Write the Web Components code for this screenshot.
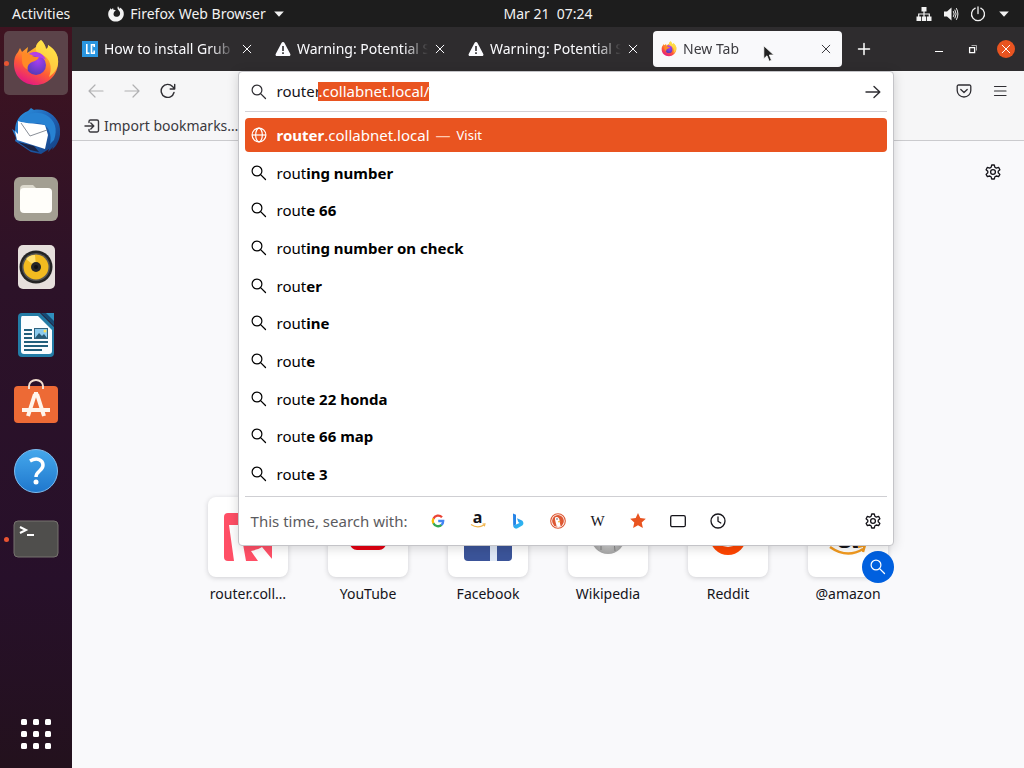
<!DOCTYPE html>
<html lang="en">
<head>
<meta charset="utf-8">
<title>New Tab</title>
<style>
html, body { margin: 0; height: 100%; overflow: hidden; }
body { font: 14px/20px "Noto Sans", "Open Sans", sans-serif; color: #15141a; }
</style>
</head>
<body>
<desktop-shell></desktop-shell>
<script>
const FOX = `<defs>
<linearGradient id="fo" x1=".8" y1="0" x2=".3" y2="1"><stop offset="0" stop-color="#fff44f"/><stop offset=".35" stop-color="#ffa52a"/><stop offset=".65" stop-color="#ff5a36"/><stop offset="1" stop-color="#e31587"/></linearGradient>
<radialGradient id="fp" cx=".6" cy=".3" r=".8"><stop offset="0" stop-color="#a63df0"/><stop offset="1" stop-color="#4a3bb0"/></radialGradient></defs>
<path fill="url(#fo)" d="M29 1c3 3 4 5 5 9 2-1 2-2 2-4 8 5 11 12 10 19-1 12-11 21-22 21C11 46 2 37 2 25c0-5 1-9 4-12l2-4 2 4 6-5-1 6c3-2 6-4 9-6 0-3 2-5 5-7z"/>
<path fill="#ffe14a" d="M29 1c3 3 4 5 5 9 2-1 2-2 2-4 8 5 11 12 10 19-1 6-5 10-9 13 3-8 2-15-3-20-4-3-9-2-10-7-1-4 2-7 5-10z" opacity=".75"/>
<circle cx="24" cy="26" r="10" fill="url(#fp)"/>
<path fill="#ff8a26" d="M10 14c4-1 8 0 10 3 2 1 5 1 7 1-1 3-4 4-7 5-4 2-5 5-4 8-4-2-6-5-6-9z"/>
<path fill="#b33fe6" d="M17 15c5-4 14-2 17 6-4-3-7-2-9-3s-5-2-8-3z"/>`;

const stroke = (d, w = 1.2) => `<path fill="none" stroke="currentColor" stroke-width="${w}" stroke-linecap="round" stroke-linejoin="round" d="${d}"/>`;

const ICONS = {
  back: [16, stroke("M15 8H1.500M7 2 1 8l6 6")],
  forward: [16, stroke("M1 8h13.500M9 2l6 6-6 6")],
  reload: [16, stroke("M14 9.500A6.500 6.500 0 1 1 12.500 3.500L14.500 5.500M14.700 1.500v4.500h-4.500", 1.4)],
  go: [16, stroke("M1 8h13.500M9 2.500l5.800 5.500L9 13.500", 1.4)],
  search: [16, `<circle cx="6" cy="6" r="4.900" fill="none" stroke="currentColor" stroke-width="1.200"/>` + stroke("M9.600 9.600l4.900 4.900", 1.3)],
  pocket: [16, stroke("M2.500 2h11a1.300 1.300 0 0 1 1.300 1.300V7.500a6.800 6.500 0 0 1-13.600 0V3.300A1.300 1.300 0 0 1 2.500 2zM4.800 6.500 8 9.500l3.200-3", 1.3)],
  menu: [16, stroke("M2.500 3.500h11.500M2.500 8h11.500M2.500 12.500h11.500", 1.2)],
  gear: [16, `<circle cx="8" cy="8" r="2.400" fill="none" stroke="currentColor" stroke-width="1.300"/>` + stroke("M6.700 1h2.600l.6 2.300 1.400.8 2.300-.7 1.300 2.300-1.700 1.600v1.500l1.700 1.600-1.300 2.200-2.300-.6-1.400.8-.6 2.200H6.700l-.6-2.200-1.400-.8-2.300.6-1.300-2.200 1.700-1.600V7.300L1.100 5.700l1.300-2.300 2.300.7 1.400-.8z", 1.3)],
  close: [16, stroke("M4.200 4.200l7.600 7.600M11.800 4.200l-7.600 7.600", 1)],
  plus: [16, stroke("M8 2.500v11M2.500 8h11", 1.5)],
  minimize: [16, `<path fill="#fff" d="M4 10h8v1H4z"/>`],
  restore: [16, `<path fill="none" stroke="#fff" d="M6.500 4.500h5v5" opacity=".6"/><path fill="none" stroke="#fff" stroke-width="1.300" d="M4.600 6.600h5v5h-5z"/>`],
  import: [16, stroke("M1 8h8.500M6.800 5 9.800 8l-3 3M5 4.500V3.500A1.500 1.500 0 0 1 6.500 2h6.500A1.500 1.500 0 0 1 14.500 3.500v9a1.500 1.500 0 0 1-1.500 1.500H6.500A1.500 1.500 0 0 1 5 12.500v-1", 1.4)],
  globe: [16, `<g fill="none" stroke="currentColor" stroke-width="1.200"><circle cx="8" cy="8" r="6.900"/><ellipse cx="8" cy="8" rx="3.300" ry="6.900"/><path d="M1 8h14"/></g>`],
  warning: [16, `<path fill="#fbfbfe" d="M8 1c.7 0 1.200.3 1.500.9l5.800 11c.5 1.100-.2 2.100-1.400 2.100H2.100C.9 15 .2 14 .7 12.900l5.800-11C6.800 1.300 7.300 1 8 1z"/><path fill="#2b2a2c" d="M7.200 5h1.600v5H7.200zM7.200 11.300h1.600v1.600H7.200z"/>`],
  lc: [16, `<path fill="#2a96e0" d="M0 0h16v16H0z"/><path fill="none" stroke="#fff" stroke-width="1.600" d="M4.800 3v9.200h2.700M12.200 6V3.800H9.500v8.400h2.700V9.500"/>`],
  fox: [48, FOX],
  foxMono: [16, `<path fill="#f2f2f2" d="M10 .2c.8 1 1 1.600 1.100 2.700.5-.2.800-.7.800-1.300C14.500 3 16 5.300 15.800 8.300c-.2 4-3.500 7.300-7.800 7.300S.4 12.400.2 8.400C.1 6.200.8 4.500 2 3.400l.4-1.300.8 1.300 2-1.500c-.1.800 0 1.400.4 1.900.8 0 1.700.2 2.200.9-1 .3-1.900.8-1.900 1.800-1.500 3.300 1.900 5.200 4.300 4 2.600-1.300 2.400-4.800.4-6.300C9.300 3 9.200 1.400 10 .2z"/>`],
  caret: [16, `<path fill="#f2f2f2" d="M2.500 5h11L8 11z"/>`],
  network: [16, `<path fill="#f2f2f2" d="M5.500 1h5v4.500h-5zM.5 10.500h4.500V15H.5zM5.800 10.500h4.400V15H5.800zM11 10.500h4.500V15H11z"/><path fill="none" stroke="#f2f2f2" stroke-width="1.200" d="M8 5v6M2.700 11V8h10.600v3"/>`],
  volume: [16, `<path fill="#f2f2f2" d="M1 5.500h3L8.500 1.500v13L4 10.500H1z"/>` + stroke("M10.500 5.500q1.600 2.500 0 5M12 4q2.400 4 0 8M13.500 2.500q3 5.500 0 11", 1)],
  power: [16, stroke("M5.200 2.200a6.500 6.500 0 1 0 5.600 0M8 .8v6.700", 1.3)],
  star: [16, `<path fill="#e95420" d="M8 0l2.300 5.100 5.500.6-4.100 3.700 1.200 5.600L8 12.200 3.100 15l1.200-5.600L.2 5.700l5.500-.6z"/>`],
  tab: [16, `<rect x=".7" y="2.700" width="14.600" height="11" rx="1.500" fill="none" stroke="currentColor" stroke-width="1.300"/>`],
  clock: [16, `<circle cx="8" cy="8" r="7" fill="none" stroke="currentColor" stroke-width="1.300"/>` + stroke("M8 4v4.200l2.800 1.800", 1.3)],
  google: [16, `<g fill="none" stroke-width="2.300"><path stroke="#ea4335" d="M12 4.300A5.200 5.200 0 0 0 3.400 5.700"/><path stroke="#fbbc05" d="M3.400 5.500a5.200 5.200 0 0 0 0 5"/><path stroke="#34a853" d="M3.400 10.300a5.200 5.200 0 0 0 8.200 1.600"/><path stroke="#4285f4" d="M8.200 8h5A5.200 5.200 0 0 1 11.400 12"/></g>`],
  bing: [16, `<defs><linearGradient id="bg" x2="1" y2="1"><stop offset="0" stop-color="#2b8ff0"/><stop offset="1" stop-color="#2fc3ef"/></linearGradient></defs><path fill="#2583e6" d="M3 .5l3 1.300v9.700L3.200 13z"/><path fill="url(#bg)" d="M7 5.300l4.500 1.900c2.300 1.200 2.500 4 .8 5.400L7 15.500c-2 .6-3.800-.8-3.800-2.700L9.500 10 8.300 9z"/>`],
  ddg: [16, `<circle cx="8" cy="8" r="7.300" fill="#fff" stroke="#de5833" stroke-width="1.100"/><circle cx="8" cy="8" r="5.900" fill="#de5833"/><path fill="#fff" d="M5 4.500c2-1.500 4.600 0 4.600 3 0 2 .8 4 1 6-1.800.7-3.200.5-4 .1C6.500 11 4.500 7 5 4.500z"/><path fill="#f5b52e" d="M8 8l3 .4-2.600 1.100z"/><circle cx="7" cy="6" r=".7" fill="#333"/>`],
  thunderbird: [48, `<defs><linearGradient id="tb" x1="0" x2="1" y1="0" y2="1"><stop offset="0" stop-color="#2c9be8"/><stop offset=".5" stop-color="#2163b5"/><stop offset="1" stop-color="#123c7c"/></linearGradient></defs><path fill="url(#tb)" d="M16 4l3-3 3 2c10-2 21 4 25 14 3 10 0 20-7 26l1-3-5 5 1-3-8 5-10-2L3 34l1-3-4-9 3 2C3 14 8 7 16 4z"/><path fill="#1b2242" d="M6 35l16 4 5 6-9-2z"/><path fill="#fff" d="M6 14l3 1 24 3 3 10-3 14-28-9-2-9 3 3z"/><path fill="none" stroke="#8a9099" d="M9 16l9 13 17-6"/><path fill="#2782d2" d="M9 14c4-7 15-11 25-6 9 5 12 14 8 25l-4 4c2-9-1-18-8-20-6-2-10 0-15-1z"/>`],
  files: [48, `<rect x="2" y="2" width="44" height="44" rx="6" fill="#a39f92"/><path fill="#dcd9cd" d="M8 14q0-4 4-4h9l3 3h8v6H8z"/><rect x="8" y="13" width="32" height="25" rx="4" fill="#fffefa"/>`],
  rhythmbox: [48, `<rect x="6" y="2" width="37" height="44" rx="5" fill="#e6dfdc"/><circle cx="24" cy="24" r="16.500" fill="#242424"/><circle cx="24" cy="24" r="14" fill="#555"/><circle cx="24" cy="24" r="12.500" fill="#f2bb20"/><path fill="#ffe173" d="M24 24 14 16a12 12 0 0 1 9-4z"/><circle cx="24" cy="24" r="5" fill="#272727"/><circle cx="24" cy="24" r="2" fill="#111"/>`],
  writer: [48, `<path fill="#237ca6" d="M10 2h18l14 14v26q0 4-4 4H10q-4 0-4-4V6q0-4 4-4z"/><path fill="#fafdff" d="M10 5h16l14 14v21q0 3-3 3H12q-3 0-3-3V8q0-3 1-3z"/><path fill="#174a73" d="M29 2l13 13V2z"/><path fill="#2f8fbe" d="M34 2h8v8z"/><path stroke="#215f7c" stroke-width="2" d="M12 19h8M12 23h8M12 27h8M12 31h24M12 35h24M12 39h18"/><path fill="#2e6380" d="M22 17h14v11H22z"/><path fill="#8bcbee" d="M23 18h12v9H23z"/><path fill="#285b75" d="M23 27l4-5 3 3 2-2 3 4z"/><circle cx="33" cy="20" r="1.500" fill="#ffe15b"/>`],
  software: [48, `<rect x="2" y="7" width="44" height="37" rx="4" fill="#ed6a35"/><path fill="none" stroke="#f3dfcf" stroke-width="2" d="M17 10V7a7 6 0 0 1 14 0v3"/><path fill="none" stroke="#fff5ec" stroke-width="4" d="M22 15h4M23 15l-7 22M25 15l7 22"/><path stroke="#fff5ec" stroke-width="4" d="M10 31h28"/>`],
  help: [48, `<defs><linearGradient id="hp" x2="0" y2="1"><stop offset="0" stop-color="#45a8ec"/><stop offset="1" stop-color="#1f77cd"/></linearGradient></defs><circle cx="24" cy="24" r="21.500" fill="url(#hp)" stroke="#7dbcf0"/><path fill="none" stroke="#fff" stroke-width="3.500" d="M18 14c7-4 13-1 13 4 0 6-7 6-7 12"/><circle cx="24" cy="35" r="2.500" fill="#fff"/>`],
  terminal: [48, `<rect x="2" y="6" width="44" height="36" rx="4" fill="#4f4e4c" stroke="#77736f"/><path fill="none" stroke="#fff" stroke-width="2" d="M8 12l6 3-6 3M15 20h7"/>`],
  apps: [48, [12, 24, 36].map(y => [12, 24, 36].map(x => `<rect x="${x - 3}" y="${y - 3}" width="6" height="6" rx="1.500" fill="#fff"/>`).join("")).join("")],
  router: [48, `<rect width="48" height="48" rx="4" fill="#ff4f66"/><path fill="#fff" d="M5 12h15l-1 19 3 17H10z"/><path fill="#fff" d="M27 38c4-1 8-2 11-4l10 12v2H34z"/>`],
  youtube: [48, `<rect x="6" y="12" width="36" height="25" rx="7" fill="#e60012"/><path fill="#fff" d="M20 19l10 6-10 6z"/>`],
  facebook: [48, `<rect width="48" height="48" rx="4" fill="#3b5499"/><path fill="#dfe8f6" d="M26 48V29h-5v-7h5v-6q0-9 9-9h6v7h-5q-3 0-3 4v4h7l-1 7h-6v19z"/>`],
  wikipedia: [48, `<defs><radialGradient id="wk"><stop offset="0" stop-color="#f2f2f2"/><stop offset="1" stop-color="#a5a5a5"/></radialGradient></defs><circle cx="24" cy="24" r="17" fill="url(#wk)"/><path fill="none" stroke="#777" stroke-width=".8" d="M10 29q6 5 12 1t14 3M17 8v29M31 8q-3 15 0 30"/>`],
  reddit: [48, `<circle cx="24" cy="24" r="18" fill="#ff4500"/><ellipse cx="24" cy="24" rx="13" ry="10" fill="#fff"/>`]
};

/* Shared base: clones the class's template into an open shadow root. */
class Base extends HTMLElement {
  connectedCallback() {
    if (this.shadowRoot) return;
    const t = document.createElement("template");
    t.innerHTML = this.render();
    this.attachShadow({ mode: "open" }).append(t.content.cloneNode(true));
    this.ready();
  }
  get(name, fallback = "") { return this.getAttribute(name) ?? fallback; }
  ready() {}
}
const define = (name, render, ready) => customElements.define(name, class extends Base {
  render() { return render(this); }
  ready() { if (ready) ready(this); }
});

define("ui-icon", el => {
  const [box, body] = ICONS[el.get("name")];
  return `<style>:host{display:block;flex:none;width:var(--size,16px);height:var(--size,16px);white-space:normal}svg{display:block;width:100%;height:100%}</style><svg viewBox="0 0 ${box} ${box}" aria-hidden="true">${body}</svg>`;
});

define("icon-button", el => `<style>
:host{display:block;flex:none}
button{display:grid;place-items:center;width:var(--box,32px);height:var(--box,32px);padding:0;border:0;border-radius:4px;background:var(--fill,none);color:inherit}
:host([round]) button{border-radius:50%}
:host([disabled]) button{color:#b0b0b2}
</style><button type="button" aria-label="${el.get("label")}" ${el.hasAttribute("disabled") ? "disabled" : ""}>${el.get("icon") ? `<ui-icon name="${el.get("icon")}"></ui-icon>` : "<slot></slot>"}</button>`);

define("top-bar", () => `<style>
:host{display:grid;grid-template-columns:72px 1fr auto 1fr;align-items:center;height:27px;background:#1d1d1d;color:#f2f2f2;font-size:14px}
div{display:flex;align-items:center}
button{display:flex;align-items:center;gap:6px;padding:0;border:0;background:none;color:inherit;font:inherit;white-space:nowrap}
.left{grid-column:1 / 3;padding-left:12px;gap:38px}
.right{justify-content:flex-end;gap:11px;padding-right:13px}
time{white-space:pre}
.small{--size:14px}
</style>
<div class="left"><button type="button">Activities</button><button type="button"><ui-icon name="foxMono"></ui-icon>Firefox Web Browser<ui-icon class="small" name="caret"></ui-icon></button></div>
<time>Mar 21  07:24</time>
<div class="right"><ui-icon name="network"></ui-icon><ui-icon name="volume"></ui-icon><ui-icon name="power"></ui-icon><ui-icon class="small" name="caret"></ui-icon></div>`);

define("dock-item", el => `<style>
:host{display:block;position:relative}
button{display:grid;place-items:center;width:64px;height:64px;padding:0;border:0;border-radius:5px;background:none;--size:48px}
:host([active]) button{background:#5b4349}
:host([running])::before{content:"";position:absolute;left:0;top:30px;width:5px;height:5px;border-radius:50%;background:#e95432}
</style><button type="button" aria-label="${el.get("label")}"><ui-icon name="${el.get("icon")}"></ui-icon></button>`);

define("app-dock", () => `<style>
:host{display:flex;flex-direction:column;align-items:center;box-sizing:border-box;gap:4px;padding:4px 0 2px;background:linear-gradient(#3f1320,#2c1228 35%,#27102a 75%,#23111d)}
.apps{margin-top:auto}
</style>
<dock-item icon="fox" label="Firefox" active running></dock-item>
<dock-item icon="thunderbird" label="Thunderbird Mail"></dock-item>
<dock-item icon="files" label="Files"></dock-item>
<dock-item icon="rhythmbox" label="Rhythmbox"></dock-item>
<dock-item icon="writer" label="LibreOffice Writer"></dock-item>
<dock-item icon="software" label="Ubuntu Software"></dock-item>
<dock-item icon="help" label="Help"></dock-item>
<dock-item icon="terminal" label="Terminal" running></dock-item>
<dock-item class="apps" icon="apps" label="Show Applications"></dock-item>`);

define("browser-tab", el => `<style>
:host{display:flex;align-items:center;box-sizing:border-box;flex:0 1 189px;min-width:0;height:36px;padding:0 4px 0 8px;border-radius:4px;color:#fbfbfe}
:host([active]){background:#f9f9fb;color:#3c3b40}
button{flex:1;min-width:0;padding:0;margin-left:6px;border:0;background:none;color:inherit;font:inherit;text-align:left;white-space:nowrap;overflow:hidden;-webkit-mask-image:linear-gradient(to left,transparent,#000 24px)}
icon-button{--box:24px}
</style><ui-icon name="${el.get("icon")}"></ui-icon><button type="button" role="tab" aria-selected="${el.hasAttribute("active")}"><slot></slot></button><icon-button icon="close" label="Close tab"></icon-button>`);

define("tab-strip", () => `<style>
:host{display:flex;align-items:center;height:44px;padding:0 9px 0 2px;background:#2e2c2e;color:#fff}
.tabs{display:flex;flex:1;gap:4px;min-width:0;align-items:center}
.new{margin-left:2px}
.controls{display:flex;align-items:center;gap:14px;--box:20px}
.close{--box:18px;--fill:#e95420}
</style>
<div class="tabs" role="tablist">
<browser-tab icon="lc">How to install Grub C</browser-tab>
<browser-tab icon="warning">Warning: Potential S</browser-tab>
<browser-tab icon="warning">Warning: Potential S</browser-tab>
<browser-tab icon="fox" active>New Tab</browser-tab>
<icon-button class="new" icon="plus" label="Open a new tab"></icon-button>
</div>
<div class="controls"><icon-button icon="minimize" label="Minimize"></icon-button><icon-button icon="restore" label="Restore"></icon-button><icon-button class="close" round icon="close" label="Close"></icon-button></div>`);

define("suggestion-row", el => `<style>
:host{display:block;padding:2px 0;min-height:0}
a{display:flex;align-items:center;box-sizing:border-box;height:100%;padding:0 6px;border-radius:4px;color:#000;text-decoration:none;white-space:pre}
ui-icon{margin-right:10px}
:host([selected]) a{background:#e95420;color:#fff}
</style><a href="#"><ui-icon name="${el.get("icon", "search")}"></ui-icon><slot></slot></a>`);

define("engine-bar", () => `<style>
:host{display:flex;align-items:center;height:48px;margin:0 6px;border-top:1px solid #cfcfd3;color:#15141a}
span{margin:0 14px 0 6px;color:#5b5b60;white-space:nowrap}
.engines{display:flex;gap:8px}
.last{margin-left:auto;margin-right:-2px}
svg,i{display:block;width:16px;height:16px}
i{font:700 16px/9px "Noto Sans",sans-serif;text-align:center}
.w{font:15px/16px "Liberation Serif",serif}
.a{position:relative}
.a svg{position:absolute;left:0;top:0}
</style>
<span>This time, search with:</span>
<div class="engines">
<icon-button icon="google" label="Google"></icon-button>
<icon-button label="Amazon.com"><i class="a">a<svg viewBox="0 0 16 16"><path fill="none" stroke="#f0b44a" stroke-width="1.100" d="M1 11.500q6.500 4.500 13 .5M12.500 11l2.500-.2-.6 2.600"/></svg></i></icon-button>
<icon-button icon="bing" label="Bing"></icon-button>
<icon-button icon="ddg" label="DuckDuckGo"></icon-button>
<icon-button label="Wikipedia"><i class="w">W</i></icon-button>
<icon-button icon="star" label="Bookmarks"></icon-button>
<icon-button icon="tab" label="Tabs"></icon-button>
<icon-button icon="clock" label="History"></icon-button>
</div>
<icon-button class="last" icon="gear" label="Search settings"></icon-button>`);

define("url-bar", () => `<style>
:host{display:block;position:relative;align-self:stretch;min-width:0}
section{position:absolute;inset:0 -1px auto -1px;z-index:2;box-sizing:border-box;font-size:15px;background:#fff;border:1px solid #c4c4c8;border-radius:4px;box-shadow:0 2px 12px rgba(0,0,0,.16)}
label{display:flex;align-items:center;height:39px;margin:0 6px;padding-left:6px;border-bottom:1px solid #d3d1d6}
input{flex:1;min-width:0;height:19px;margin-left:10px;padding:0;border:0;outline:0;background:none;color:#15141a;font:inherit;line-height:19px;caret-color:transparent}
input::selection{background:#e95420;color:#fff}
label ui-icon{margin-right:6px}
label ui-icon:first-child{margin-right:0}
nav{display:grid;grid-template-rows:repeat(10,1fr);height:377px;margin:4px 6px 3px}
small{font-size:13px}
em{margin:0 6px;font-style:normal;color:#ffc9b0}
</style>
<section>
<label><ui-icon name="search"></ui-icon><input type="text" aria-label="Search or enter address" value="router.collabnet.local/"><ui-icon name="go"></ui-icon></label>
<nav>
<suggestion-row selected icon="globe"><b>router</b>.collabnet.local<em>—</em><small>Visit</small></suggestion-row>
<suggestion-row>rout<b>ing number</b></suggestion-row>
<suggestion-row>rout<b>e 66</b></suggestion-row>
<suggestion-row>rout<b>ing number on check</b></suggestion-row>
<suggestion-row>rout<b>er</b></suggestion-row>
<suggestion-row>rout<b>ine</b></suggestion-row>
<suggestion-row>rout<b>e</b></suggestion-row>
<suggestion-row>rout<b>e 22 honda</b></suggestion-row>
<suggestion-row>rout<b>e 66 map</b></suggestion-row>
<suggestion-row>rout<b>e 3</b></suggestion-row>
</nav>
<engine-bar></engine-bar>
</section>`, el => {
  const input = el.shadowRoot.querySelector("input");
  input.focus();
  input.setSelectionRange(6, input.value.length);
});

define("nav-bar", () => `<style>
:host{display:block;background:#f6f6f7;border-bottom:1px solid #cbcbce;color:#2f2e33}
.row{display:grid;grid-template-columns:auto 1fr 12fr 1fr auto;align-items:center;height:40px;padding:0 8px}
.group{display:flex;gap:4px}
.group.end{grid-column:5}
url-bar{grid-column:3}
.marks{display:flex;height:29px;padding-left:12px}
a{display:flex;align-items:center;gap:4px;color:#3a393e;text-decoration:none;white-space:nowrap}
</style>
<div class="row">
<div class="group"><icon-button icon="back" label="Back" disabled></icon-button><icon-button icon="forward" label="Forward" disabled></icon-button><icon-button icon="reload" label="Reload"></icon-button></div>
<url-bar></url-bar>
<div class="group end"><icon-button icon="pocket" label="Save to Pocket"></icon-button><icon-button icon="menu" label="Menu"></icon-button></div>
</div>
<div class="marks"><a href="#"><ui-icon name="import"></ui-icon>Import bookmarks…</a></div>`);

define("top-site", el => `<style>
:host{display:block;width:120px}
a{display:flex;flex-direction:column;align-items:center;gap:7px;color:#15141a;text-decoration:none;white-space:nowrap}
.tile{position:relative;display:grid;place-items:center;width:80px;height:80px;border-radius:8px;background:#fff;box-shadow:0 1px 5px rgba(58,57,68,.22);--size:48px}
.badge{position:absolute;right:-6px;bottom:-6px;display:grid;place-items:center;width:32px;height:32px;border-radius:50%;background:#0060df;color:#fff;--size:16px}
.a{width:48px;height:48px;font:700 44px/36px "Noto Sans",sans-serif;text-align:center;position:relative}
.a svg{position:absolute;left:0;top:0}
</style><a href="#"><span class="tile">${el.get("icon") ? `<ui-icon name="${el.get("icon")}"></ui-icon>` : `<span class="a">a<svg width="48" height="48" viewBox="0 0 48 48"><path fill="none" stroke="#f29a1f" stroke-width="2.500" d="M6 34q17 12 33 2M34 34l7-2-2 7"/></svg></span>`}${el.hasAttribute("searchable") ? `<span class="badge"><ui-icon name="search"></ui-icon></span>` : ""}</span><span><slot></slot></span></a>`);

define("new-tab-page", () => `<style>
:host{display:flex;flex-direction:column;flex:1;min-height:0;background:#f9f9fb}
icon-button{align-self:flex-end;margin:15px 15px 0 0}
nav{display:flex;justify-content:center;margin-top:309px}
</style>
<icon-button icon="gear" label="Personalize new tab"></icon-button>
<nav aria-label="Top sites">
<top-site icon="router">router.coll…</top-site>
<top-site icon="youtube">YouTube</top-site>
<top-site icon="facebook">Facebook</top-site>
<top-site icon="wikipedia">Wikipedia</top-site>
<top-site icon="reddit">Reddit</top-site>
<top-site searchable>@amazon</top-site>
</nav>`);

define("browser-window", () => `<style>
:host{display:flex;flex-direction:column;min-width:0;min-height:0}
</style><tab-strip></tab-strip><nav-bar></nav-bar><new-tab-page></new-tab-page>`);

define("mouse-pointer", () => `<style>
:host{position:absolute;left:763px;top:45px;z-index:5;pointer-events:none}
svg{display:block}
</style><svg width="12" height="18" viewBox="0 0 12 18"><path fill="#222" stroke="#fff" stroke-width=".8" d="M.8.8v13l3.200-3 2.200 5.500 2.300-1L6.300 10h4.500z"/></svg>`);

define("desktop-shell", () => `<style>
:host{display:grid;grid-template:auto 1fr / 72px 1fr;height:100vh;position:relative;overflow:hidden}
top-bar{grid-column:1 / -1}
</style><top-bar></top-bar><app-dock></app-dock><browser-window></browser-window><mouse-pointer></mouse-pointer>`);
</script>
</body>
</html>
